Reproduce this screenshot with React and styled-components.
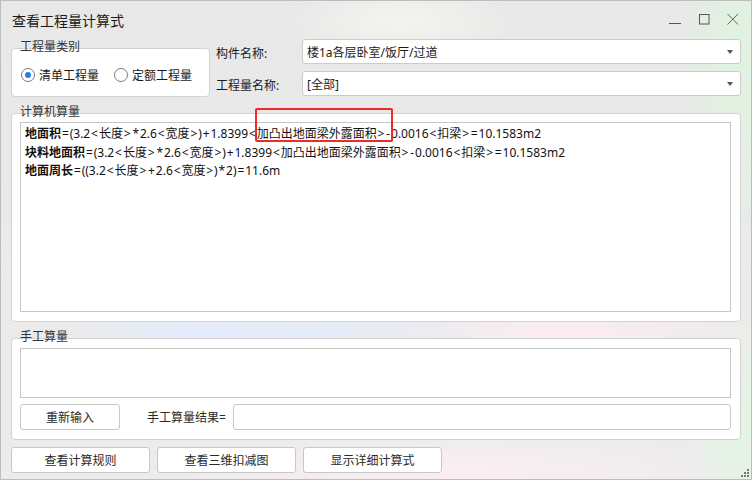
import React from 'react';
import styled, { createGlobalStyle } from 'styled-components';

const GlobalStyle = createGlobalStyle`
  html, body {
    margin: 0;
    padding: 0;
    background: #ffffff;
  }
  * {
    box-sizing: border-box;
  }
`;

const FONT = `"Noto Sans", "Noto Sans CJK SC", sans-serif`;

const Window = styled.div`
  position: relative;
  width: 752px;
  height: 480px;
  border: 1px solid #bdbdbd;
  font-family: ${FONT};
  font-size: 12px;
  color: #1f1f1f;
  overflow: hidden;
  background:
    radial-gradient(ellipse 60px 200px at 735px 60px, rgba(222, 245, 222, 0.9), transparent),
    radial-gradient(ellipse 140px 40px at 200px 330px, rgba(226, 236, 252, 0.9), transparent),
    radial-gradient(ellipse 200px 50px at 300px 332px, rgba(226, 236, 252, 0.8), transparent),
    radial-gradient(ellipse 220px 60px at 560px 335px, rgba(253, 236, 242, 0.9), transparent),
    radial-gradient(ellipse 300px 40px at 450px 470px, rgba(253, 238, 244, 0.9), transparent),
    radial-gradient(ellipse 50px 120px at 735px 420px, rgba(225, 247, 225, 0.9), transparent),
    radial-gradient(ellipse 120px 40px at 400px 20px, rgba(245, 245, 240, 0.9), transparent),
    linear-gradient(180deg, #e8e8e8 0%, #ececec 100%);
`;

const TitleBar = styled.div`
  height: 36px;
  display: flex;
  align-items: center;
  justify-content: space-between;
  padding-left: 11px;
`;

const Title = styled.div`
  font-family: "Noto Sans CJK SC", sans-serif;
  font-size: 14px;
  color: #1a1a1a;
  margin-top: 2px;
`;

const Controls = styled.div`
  display: flex;
  align-items: center;
  height: 100%;
  padding-right: 11px;
  gap: 15px;
  color: #666;
`;

const CtrlIcon = styled.svg`
  width: 14px;
  height: 14px;
  display: block;
  margin-top: 2px;
`;

const Body = styled.div`
  display: flex;
  flex-direction: column;
  padding: 2px 10px 0 10px;
`;

const TopRow = styled.div`
  display: flex;
  gap: 6px;
`;

const Group = styled.div`
  display: flex;
  flex-direction: column;
  width: ${(p) => p.$width || 'auto'};
  margin-top: ${(p) => p.$top || 0}px;
`;

const Legend = styled.div`
  position: relative;
  z-index: 1;
  height: 14px;
  line-height: 14px;
  font-size: 12px;
  color: #333;
  padding-left: 9px;
  margin-bottom: -6px;
`;

const Frame = styled.div`
  background: #ffffff;
  border: 1px solid #d2d2d2;
  border-radius: 4px;
  height: ${(p) => p.$height}px;
  padding: ${(p) => p.$pad || '0'};
  display: flex;
  flex-direction: column;
`;

const RadioRow = styled.div`
  display: flex;
  align-items: center;
  height: 100%;
  padding: 4px 0 0 9px;
  gap: 15px;
`;

const RadioItem = styled.label`
  display: flex;
  align-items: center;
  gap: 4px;
  font-size: 12px;
  color: #1a1a1a;
`;

const RadioCircle = styled.span`
  width: 14px;
  height: 14px;
  border-radius: 50%;
  border: 1px solid #7a7a7a;
  display: flex;
  align-items: center;
  justify-content: center;
  background: #fff;

  &::after {
    content: '';
    width: 6px;
    height: 6px;
    border-radius: 50%;
    background: ${(p) => (p.$checked ? '#2a7de1' : 'transparent')};
  }
`;

const Fields = styled.div`
  flex: 1;
  display: flex;
  flex-direction: column;
  gap: 7px;
`;

const FieldRow = styled.div`
  display: flex;
  align-items: center;
`;

const FieldLabel = styled.div`
  width: 86px;
  color: #1a1a1a;
  padding-top: 2px;
`;

const Combo = styled.div`
  flex: 1;
  height: 25px;
  background: #fff;
  border: 1px solid #cccccc;
  border-radius: 3px;
  display: flex;
  align-items: center;
  justify-content: space-between;
  padding: 0 7px 0 4px;
  color: #1a1a1a;
`;

const Caret = styled.span`
  width: 0;
  height: 0;
  border-left: 3px solid transparent;
  border-right: 3px solid transparent;
  border-top: 4px solid #555;
  margin-top: 1px;
`;

const CalcGroup = styled(Group)`
  margin-top: 8px;
`;

const Output = styled.div`
  position: relative;
  flex: 1;
  border: 1px solid #c6c6c6;
  background: #fff;
  padding: 2px 4px;
  line-height: 18.5px;
  color: #111;
`;

const Line = styled.div`
  white-space: nowrap;
`;

const Key = styled.b`
  font-weight: 700;
`;

const Op = styled.span`
  margin: 0 0.9px;
`;

const Highlight = styled.div`
  position: absolute;
  left: 234px;
  top: -15px;
  width: 138px;
  height: 34px;
  border: 2px solid #ee2b24;
  border-radius: 2px;
  pointer-events: none;
`;

const ManualArea = styled.div`
  height: 50px;
  border: 1px solid #c6c6c6;
  background: #fff;
`;

const ManualRow = styled.div`
  display: flex;
  align-items: center;
  margin-top: 6px;
`;

const Button = styled.div`
  width: ${(p) => p.$width}px;
  height: 26px;
  border: 1px solid #c8c8c8;
  border-radius: 3px;
  background: #fff;
  display: flex;
  align-items: center;
  justify-content: center;
  color: #2a2a2a;
`;

const ResultLabel = styled.div`
  margin-left: 27px;
  width: 86px;
  color: #2a2a2a;
`;

const ResultInput = styled.div`
  flex: 1;
  height: 26px;
  border: 1px solid #c8c8c8;
  border-radius: 3px;
  background: #fff;
`;

const ButtonBar = styled.div`
  display: flex;
  gap: 7px;
  margin-top: 7px;
`;

const Grip = styled.svg`
  position: absolute;
  right: 2px;
  bottom: 2px;
  width: 8px;
  height: 8px;
`;

const lines = [
  { key: '地面积', rest: '=(3.2<长度>*2.6<宽度>)+1.8399<加凸出地面梁外露面积>-0.0016<扣梁>=10.1583m2' },
  { key: '块料地面积', rest: '=(3.2<长度>*2.6<宽度>)+1.8399<加凸出地面梁外露面积>-0.0016<扣梁>=10.1583m2' },
  { key: '地面周长', rest: '=((3.2<长度>+2.6<宽度>)*2)=11.6m' },
];

const renderFormula = (text) =>
  text.split(/([<>=+*-])/).map((part, i) =>
    /^[<>=+*-]$/.test(part) ? <Op key={i}>{part}</Op> : <React.Fragment key={i}>{part}</React.Fragment>
  );

export default function App() {
  return (
    <>
      <GlobalStyle />
      <Window>
        <TitleBar>
          <Title>查看工程量计算式</Title>
          <Controls>
            <CtrlIcon viewBox="0 0 14 14">
              <path d="M1 10.5 H13" stroke="#555" strokeWidth="1" />
            </CtrlIcon>
            <CtrlIcon viewBox="0 0 14 14">
              <rect x="2.5" y="1.5" width="9.5" height="9.5" fill="none" stroke="#555" strokeWidth="1" />
            </CtrlIcon>
            <CtrlIcon viewBox="0 0 14 14">
              <path d="M1.5 1 L12 11.5 M12 1 L1.5 11.5" stroke="#666" strokeWidth="1" />
            </CtrlIcon>
          </Controls>
        </TitleBar>
        <Body>
          <TopRow>
            <Group $width="199px" $top={1}>
              <Legend>工程量类别</Legend>
              <Frame $height={49}>
                <RadioRow>
                  <RadioItem>
                    <RadioCircle $checked />
                    清单工程量
                  </RadioItem>
                  <RadioItem>
                    <RadioCircle />
                    定额工程量
                  </RadioItem>
                </RadioRow>
              </Frame>
            </Group>
            <Fields>
              <FieldRow>
                <FieldLabel>构件名称:</FieldLabel>
                <Combo>
                  <span>楼1a各层卧室/饭厅/过道</span>
                  <Caret />
                </Combo>
              </FieldRow>
              <FieldRow>
                <FieldLabel>工程量名称:</FieldLabel>
                <Combo>
                  <span>[全部]</span>
                  <Caret />
                </Combo>
              </FieldRow>
            </Fields>
          </TopRow>

          <CalcGroup>
            <Legend>计算机算量</Legend>
            <Frame $height={209} $pad="8px 9px 9px 8px">
              <Output>
                {lines.map((l) => (
                  <Line key={l.key}>
                    <Key>{l.key}</Key>
                    {renderFormula(l.rest)}
                  </Line>
                ))}
                <Highlight />
              </Output>
            </Frame>
          </CalcGroup>

          <CalcGroup>
            <Legend>手工算量</Legend>
            <Frame $height={102} $pad="9px 9px 0 8px">
              <ManualArea />
              <ManualRow>
                <Button $width={100}>重新输入</Button>
                <ResultLabel>手工算量结果=</ResultLabel>
                <ResultInput />
              </ManualRow>
            </Frame>
          </CalcGroup>

          <ButtonBar>
            <Button $width={139}>查看计算规则</Button>
            <Button $width={139}>查看三维扣减图</Button>
            <Button $width={139}>显示详细计算式</Button>
          </ButtonBar>
        </Body>
        <Grip viewBox="0 0 8 8">
          <rect x="6" y="0" width="2" height="2" fill="#777" />
          <rect x="3" y="3" width="2" height="2" fill="#777" />
          <rect x="6" y="3" width="2" height="2" fill="#777" />
          <rect x="0" y="6" width="2" height="2" fill="#777" />
          <rect x="3" y="6" width="2" height="2" fill="#777" />
          <rect x="6" y="6" width="2" height="2" fill="#777" />
        </Grip>
      </Window>
    </>
  );
}
